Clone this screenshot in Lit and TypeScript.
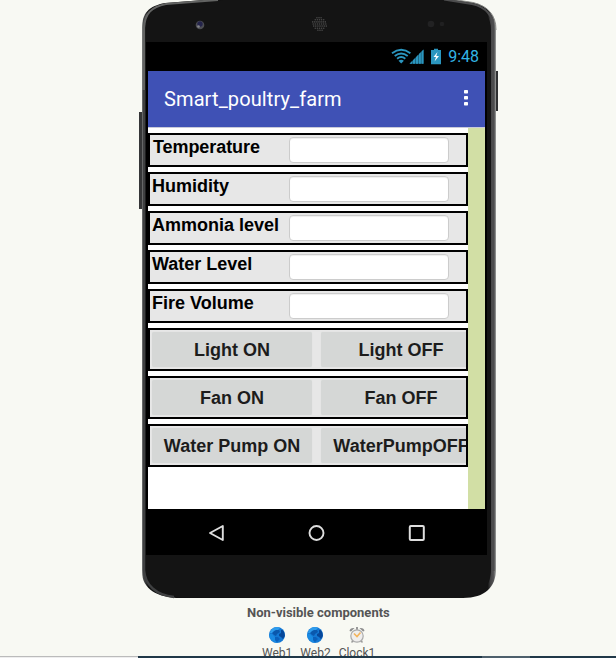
import { LitElement, html, css, svg } from "lit";
import { customElement, property } from "lit/decorators.js";

@customElement("phone-shell")
class PhoneShell extends LitElement {
  static styles = css`
    :host { display: block; }
    svg { display: block; }
  `;
  render() {
    const dots = [];
    for (let y = -3; y <= 3; y++)
      for (let x = -3; x <= 3; x++)
        if (x * x + y * y < 12)
          dots.push(svg`<circle cx=${181.5 + x * 2.1 + (y % 2) * 0.5} cy=${24 + y * 2.1} r=".8" fill="#484848" />`);
    return html`<svg width="362" height="600" viewBox="0 0 362 600">
      <defs>
        <linearGradient id="edge" x1="4" x2="358" y1="0" y2="0" gradientUnits="userSpaceOnUse">
          <stop offset="0" stop-color="#8b8d8b" />
          <stop offset=".004" stop-color="#48494a" />
          <stop offset=".011" stop-color="#343536" />
          <stop offset=".017" stop-color="#101010" />
          <stop offset=".977" stop-color="#141414" />
          <stop offset=".984" stop-color="#414142" />
          <stop offset=".993" stop-color="#555556" />
          <stop offset="1" stop-color="#999b99" />
        </linearGradient>
      </defs>
      <rect x="1" y="112" width="5" height="97" fill="#353637" />
      <rect x="356" y="71" width="4" height="40" fill="#303132" />
      <path d="M4 28C4 13 11 6 27 3L78 -1H312L335 2.500C350 6 358 15 358 30V569C358 587 347 598 325 598H42C20 598 4 589 4 572Z" fill="url(#edge)" />
      <path d="M7 28C7 15 14 8 30 5L85 0H306L332 4.500C346 7.500 353 17 353 30V569C353 586 344 597 323 597H42C22 597 8 588 7 572Z" fill="#141414" />
      <path d="M6 100V28C6.500 14 13 7 28 4L80 0" fill="none" stroke="#626362" stroke-width="2.200" />
      <path d="M306 -.5L334 4C348 7 355.500 16 355.500 30V571" fill="none" stroke="#4c4c4d" stroke-width="2" />
      <path d="M312 -1L335 2.500C350 6 358 15 358 30" fill="none" stroke="#8a8b88" stroke-width="1" />
      <path d="M6 90V570C7 585 18 595 36 597" fill="none" stroke="#3f4041" stroke-width="2.500" />
      <circle cx="62" cy="25" r="4.300" fill="#4c4d52" />
      <circle cx="62" cy="24" r="2.700" fill="#24244b" />
      <circle cx="60.500" cy="26.500" r="1.300" fill="#85868b" />
      ${dots}
      <circle cx="293" cy="24" r="3.300" fill="#222223" />
      <circle cx="304" cy="24" r="2.300" fill="#202021" />
    </svg>`;
  }
}

@customElement("sensor-row")
class SensorRow extends LitElement {
  @property() label = "";
  static styles = css`
    :host {
      display: flex; box-sizing: border-box; height: 34px; width: 320px;
      border: 2px solid #000; background: #e7e7e7; overflow: hidden;
    }
    .label {
      width: 137px; padding-left: 2px; box-sizing: content-box;
      font: bold 18px/24px "Liberation Sans", Arial, sans-serif; color: #000; white-space: nowrap;
    }
    :host(.first) .label { width: 136px; padding-left: 3px; letter-spacing: -0.08px; }
    .field {
      box-sizing: border-box; width: 160px; height: 26px; margin-top: 2px;
      border: 1px solid #ccc; border-radius: 4px; background: #fff;
      box-shadow: inset 0 1px 1px #0001;
    }
  `;
  render() {
    return html`<div class="label">${this.label}</div><div class="field"></div>`;
  }
}

@customElement("button-row")
class ButtonRow extends LitElement {
  @property() on = "";
  @property() off = "";
  static styles = css`
    :host {
      display: flex; gap: 9px; box-sizing: border-box; width: 320px; height: 43px;
      padding: 2px; border: 2px solid #000; background: #e7e7e7; overflow: hidden;
    }
    .button {
      flex: none; width: 160px; height: 35px; border-radius: 2px; background: #d5d7d6;
      box-shadow: 0 0 1px #d5d7d6;
      font: bold 18px/36px "Liberation Sans", Arial, sans-serif;
      color: #1c1c1c; text-align: center; white-space: nowrap;
    }
  `;
  render() {
    return html`<div class="button">${this.on}</div><div class="button">${this.off}</div>`;
  }
}

@customElement("app-root")
class AppRoot extends LitElement {
  static styles = css`
    :host {
      display: block; position: relative; width: 616px; height: 658px; overflow: hidden;
      background: #f8f9f3; font-family: Roboto, sans-serif;
    }
    .phone { position: relative; width: 362px; height: 598px; margin-left: 138px; }
    phone-shell { position: absolute; inset: 0; }
    .screen {
      position: absolute; left: 8px; top: 42px; width: 341px; height: 513px;
      background: #000; display: flex; flex-direction: column;
    }
    .status {
      height: 29px; display: flex; align-items: center; justify-content: flex-end;
      padding-right: 8px; color: #33b5e5; font-size: 16px;
    }
    .status svg { display: block; margin-right: 6px; }
    .app { width: 337px; margin-left: 2px; height: 438px; display: flex; flex-direction: column; }
    .title {
      height: 56px; flex: none; background: #3f51b5; color: #fff; display: flex;
      align-items: center; justify-content: space-between; box-sizing: border-box;
      padding: 0 17px 0 16px; font-size: 20px; letter-spacing: 0.11px;
    }
    .more { display: block; margin-top: -2px; }
    .content { flex: 1; background: #d2dfa5; border-top: 1px solid #c8cad9; }
    .form {
      box-sizing: border-box; width: 320px; height: 100%; background: #fff; padding-top: 5px;
      display: flex; flex-direction: column; gap: 5px;
    }
    .nav { display: flex; padding-left: 61px; padding-top: 14px; gap: 80px; }
    .heading {
      margin-top: 7px; margin-left: 247px; font-size: 13px; line-height: 16px;
      font-weight: bold; color: #555; white-space: nowrap;
    }
    .components { display: flex; gap: 8px; margin: 6px 0 0 262px; }
    .component {
      display: flex; flex-direction: column; align-items: center;
      font-size: 12px; line-height: 15px; color: #555;
    }
    .component svg { display: block; margin-bottom: 3px; }
    .taskbar { position: absolute; left: 0; right: 0; bottom: 0; height: 2px; display: flex; }
    .seg1 { width: 138px; box-sizing: border-box; border-top: 1px solid #bbb; background: #eee; }
    .seg2 { width: 344px; background: #203848; }
    .seg3 { width: 48px; background: #4e606c; }
    .seg4 { flex: 1; background: #203848; }
  `;

  globe() {
    return html`<svg width="16" height="16" viewBox="0 0 16 16">
      <circle cx="8" cy="8" r="8" fill="#1478d4" />
      <path d="M1.500 4Q4 0 8 0Q10 0 11 1L9 3L6 4L4 6L1 6Z" fill="#2f9cec" />
      <path d="M0 7L3 7L6 10L6 13L8 15.900Q1 15 0 8Z" fill="#1a8ae2" />
      <path d="M7 3L10 3L11 5L8 7L7 9L5 8L3 6L5 4Z" fill="#0a58ad" />
      <path d="M12 3L14 3.200Q16 6 15.900 9L14 12L12 10L10 9L10 7L12 6Z" fill="#07489a" />
      <path d="M6 10L9 10L11 12L8 15L6 13Z" fill="#0b60bb" />
    </svg>`;
  }

  render() {
    return html`
      <div class="phone">
        <phone-shell></phone-shell>
        <div class="screen">
          <div class="status">
            <svg width="51" height="17" viewBox="0 0 51 17">
              <g fill="none" stroke="#2b96bf" stroke-width="1.900">
                <path d="M1 5.200Q10.200 -1.800 19.400 5.200" />
                <path d="M3.700 8.100Q10.200 2.900 16.700 8.100" />
                <path d="M6.100 10.800Q10.200 7.400 14.300 10.800" />
              </g>
              <path d="M7.500 12.800Q10.200 10.800 12.900 12.800L10.200 15.500Z" fill="#2b96bf" />
              <path d="M18.500 15.800L32.500 1.500V15.800Z" fill="#1e6986" />
              <path d="M18.500 15.800L21 13.300V15.800ZM22 12.200L24 10.200V15.800H22ZM25 9.200L27 7.100V15.800H25ZM28 6.100L29.800 4.300V15.800H28ZM30.700 3.400L32.500 1.500V15.800H30.700Z" fill="#2b96bf" />
              <path d="M40 2H43V.8H47V2H50V16.200H40Z" fill="#2b96bf" />
              <path d="M46.500 4L42.500 9H45L43.500 13.500L48 8H45.300Z" fill="#fff" />
            </svg>
            <span>9:48</span>
          </div>
          <div class="app">
            <div class="title">
              <span>Smart_poultry_farm</span>
              <svg class="more" width="4" height="16" viewBox="0 0 4 16" fill="#fff">
                <rect width="4" height="3.500" y="0" rx=".7" />
                <rect width="4" height="3.500" y="6" rx=".7" />
                <rect width="4" height="3.500" y="12" rx=".7" />
              </svg>
            </div>
            <div class="content">
              <div class="form">
                <sensor-row class="first" label="Temperature"></sensor-row>
                <sensor-row label="Humidity"></sensor-row>
                <sensor-row label="Ammonia level"></sensor-row>
                <sensor-row label="Water Level"></sensor-row>
                <sensor-row label="Fire Volume"></sensor-row>
                <button-row on="Light ON" off="Light OFF"></button-row>
                <button-row on="Fan ON" off="Fan OFF"></button-row>
                <button-row on="Water Pump ON" off="WaterPumpOFF"></button-row>
              </div>
            </div>
          </div>
          <div class="nav">
            <svg width="20" height="20" viewBox="0 0 20 20"><path d="M3 10L15.800 3V17Z" fill="none" stroke="#dedede" stroke-width="1.900" stroke-linejoin="round" /></svg>
            <svg width="20" height="20" viewBox="0 0 20 20"><circle cx="9.500" cy="10" r="7" fill="none" stroke="#dedede" stroke-width="1.900" /></svg>
            <svg width="20" height="20" viewBox="0 0 20 20"><rect x="2.800" y="2.900" width="14" height="14.200" rx="1" fill="none" stroke="#dedede" stroke-width="2" /></svg>
          </div>
        </div>
      </div>
      <div class="heading">Non-visible components</div>
      <div class="components">
        <div class="component">${this.globe()}<span>Web1</span></div>
        <div class="component">${this.globe()}<span>Web2</span></div>
        <div class="component">
          <svg width="16" height="16" viewBox="0 0 16 16">
            <path d="M.5 4Q1 .5 5.500 1L2 4.500ZM15.500 4Q15 .5 10.500 1L14 4.500Z" fill="#8d8d8d" />
            <path d="M7 0H9V3H7ZM3 13L2 15.500H4L5 14ZM13 13L14 15.500H12L11 14Z" fill="#999" />
            <circle cx="8" cy="9" r="6.200" fill="#efeeed" stroke="#a9a9a9" stroke-width="1.200" />
            <path d="M5 6.500L8 9.500L11.500 5.500" fill="none" stroke="#f4b45b" stroke-width="1.600" />
          </svg>
          <span>Clock1</span>
        </div>
      </div>
      <div class="taskbar"><div class="seg1"></div><div class="seg2"></div><div class="seg3"></div><div class="seg4"></div></div>
    `;
  }
}
